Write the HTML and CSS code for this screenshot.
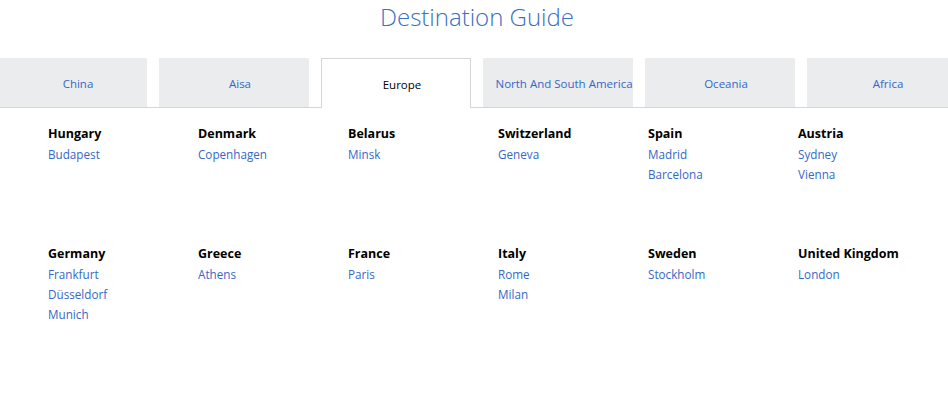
FILE: index.html
```html
<!DOCTYPE html>
<html lang="en">
<head>
  <meta charset="UTF-8">
  <meta name="viewport" content="width=device-width, initial-scale=1.0">
  <title>Destination Guide</title>
  <link rel="stylesheet" href="styles.css">
</head>
<body>
  <h1 class="title">Destination Guide</h1>

  <!-- Region tabs -->
  <div class="tabs">
    <a class="tab" href="#">China</a>
    <a class="tab" href="#">Aisa</a>
    <a class="tab active" href="#">Europe</a>
    <a class="tab" href="#">North And South America</a>
    <a class="tab" href="#">Oceania</a>
    <a class="tab" href="#">Africa</a>
  </div>

  <!-- Countries -->
  <div class="countries">
    <div class="country">
      <h3>Hungary</h3>
      <a href="#">Budapest</a>
    </div>
    <div class="country">
      <h3>Denmark</h3>
      <a href="#">Copenhagen</a>
    </div>
    <div class="country">
      <h3>Belarus</h3>
      <a href="#">Minsk</a>
    </div>
    <div class="country">
      <h3>Switzerland</h3>
      <a href="#">Geneva</a>
    </div>
    <div class="country">
      <h3>Spain</h3>
      <a href="#">Madrid</a>
      <a href="#">Barcelona</a>
    </div>
    <div class="country">
      <h3>Austria</h3>
      <a href="#">Sydney</a>
      <a href="#">Vienna</a>
    </div>
    <div class="country">
      <h3>Germany</h3>
      <a href="#">Frankfurt</a>
      <a href="#">Düsseldorf</a>
      <a href="#">Munich</a>
    </div>
    <div class="country">
      <h3>Greece</h3>
      <a href="#">Athens</a>
    </div>
    <div class="country">
      <h3>France</h3>
      <a href="#">Paris</a>
    </div>
    <div class="country">
      <h3>Italy</h3>
      <a href="#">Rome</a>
      <a href="#">Milan</a>
    </div>
    <div class="country">
      <h3>Sweden</h3>
      <a href="#">Stockholm</a>
    </div>
    <div class="country">
      <h3>United Kingdom</h3>
      <a href="#">London</a>
    </div>
  </div>
</body>
</html>
```

FILE: styles.css
```css
body {
  margin: 0;
  font-family: "Open Sans", "Noto Sans", sans-serif;
  background-color: white;
  overflow: hidden;
}

.title {
  margin: 0;
  height: 58px;
  padding-left: 6px;
  font-size: 24px;
  font-weight: 300;
  line-height: 33px;
  color: #3a6fc4;
  text-align: center;
}

.tabs {
  display: flex;
  gap: 12px;
  margin-left: -3px;
  border-bottom: 1px solid #d6d6d6;
  height: 49px;
}

.tab {
  flex: 0 0 150px;
  box-sizing: border-box;
  padding: 0 0 0 12px;
  background-color: #ebeced;
  color: #3568c6;
  font-size: 11.5px;
  line-height: 52px;
  text-align: center;
  text-decoration: none;
  white-space: nowrap;
  overflow: hidden;
}

.tab.active {
  background-color: white;
  color: black;
  border: 1px solid #d6d6d6;
  border-bottom: none;
  height: 50px;
  line-height: 51px;
}

/* Country grid */
.countries {
  display: grid;
  grid-template-columns: repeat(6, 150px);
  grid-auto-rows: 120px;
  padding: 17px 0 0 48px;
}

.country {
  display: flex;
  flex-direction: column;
}

.country h3 {
  margin: 0 0 1px;
  font-size: 12.5px;
  font-weight: 700;
  line-height: 18px;
  color: black;
}

.country a {
  font-size: 11.7px;
  line-height: 20px;
  color: #3568c6;
  text-decoration: none;
}
```
